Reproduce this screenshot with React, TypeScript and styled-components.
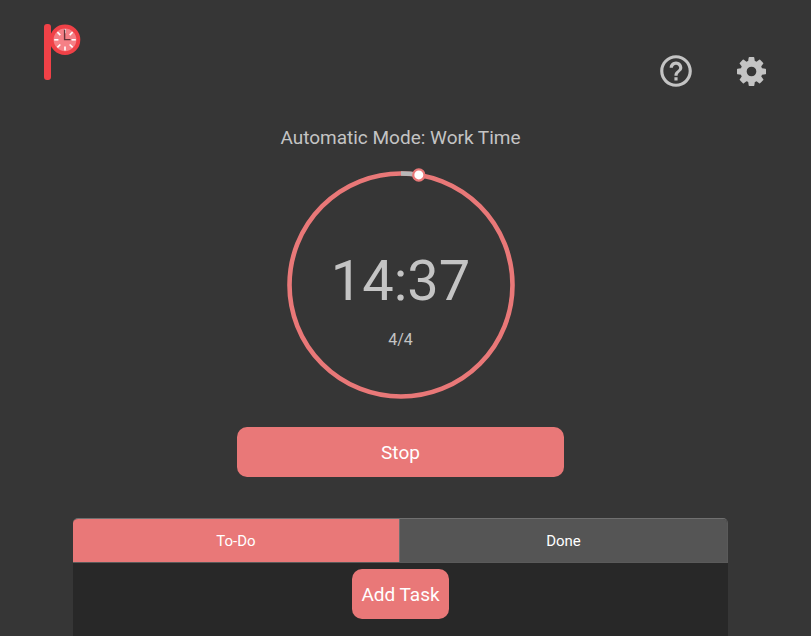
import React from "react";
import styled, { createGlobalStyle } from "styled-components";
import { MdHelpOutline } from "react-icons/md";

const GlobalStyle = createGlobalStyle`
  *, *::before, *::after { box-sizing: border-box; }
  html { background: #363636; }
  body {
    margin: 0;
    min-height: 100vh;
    color: #c4c4c4;
    font-family: Roboto, sans-serif;
  }
  button { font-family: inherit; cursor: pointer; }
  #root { min-height: 100vh; display: flex; flex-direction: column; }
`;

const Page = styled.div`
  flex: 1;
  display: flex;
  flex-direction: column;
`;

const Header = styled.header`
  display: flex;
  justify-content: space-between;
  padding: 24px 45px 0 43px;
  height: 124px;
`;

const Tools = styled.nav`
  display: flex;
  align-items: center;
  gap: 42px;
  height: 38px;
  margin-top: 28px;
`;

const IconButton = styled.button`
  display: flex;
  padding: 0;
  border: 0;
  background: none;
  color: #c4c4c4;
`;

const Main = styled.main`
  flex: 1;
  display: flex;
  flex-direction: column;
  align-items: center;
  padding: 0 83px 0 73px;
`;

const Mode = styled.h1`
  margin: 0;
  font-size: 19px;
  font-weight: 400;
  line-height: 28px;
`;

const Dial = styled.section`
  display: grid;
  place-items: center;
  margin-top: 13px;
  > * { grid-area: 1 / 1; }
`;

const Readout = styled.div`
  display: flex;
  flex-direction: column;
  align-items: center;
  gap: 16px;
  padding-top: 28px;
`;

const Time = styled.div`
  font-size: 56px;
  line-height: 66px;
`;

const Round = styled.div`
  font-size: 16px;
  line-height: 20px;
`;

const PinkButton = styled.button<{ $wide?: boolean }>`
  width: ${(p) => (p.$wide ? "50%" : "auto")};
  height: 50px;
  padding: 0 9px;
  border: 0;
  border-radius: 10px;
  background: #e97878;
  color: #fff;
  font-size: 19px;
`;

const StopRow = styled.div`
  display: flex;
  justify-content: center;
  width: 100%;
  margin-top: 22px;
`;

const Tasks = styled.section`
  flex: 1;
  display: flex;
  flex-direction: column;
  width: 100%;
  margin-top: 41px;
`;

const TabList = styled.div`
  display: grid;
  grid-template-columns: 1fr 1fr;
  height: 45px;
  overflow: hidden;
  border: solid;
  border-width: 1px 1px 1px 0;
  border-color: #707070 #5a5a5a #5a5a5a;
  border-radius: 5px 5px 0 0;
`;

const Tab = styled.button<{ $active?: boolean }>`
  padding: 0;
  border: 0;
  border-right: ${(p) => (p.$active ? "1px solid #707070" : "0")};
  background: ${(p) => (p.$active ? "#e97878" : "#555")};
  color: #fff;
  font-size: 15px;
`;

const Panel = styled.div`
  flex: 1;
  display: flex;
  justify-content: center;
  align-items: flex-start;
  padding-top: 6px;
  background: #282828;
`;

const HOUR_MARKS = [0, 45, 90, 135, 180, 225, 270, 315];

function Logo() {
  return (
    <svg width="38" height="57" viewBox="0 0 38 57" role="img" aria-label="Pomodoro logo">
      <rect x="1" y="0" width="7" height="56" rx="3" fill="#f04147" />
      <circle cx="22" cy="15.8" r="15.3" fill="#f04147" />
      <circle cx="22" cy="15.8" r="11.4" fill="#f58086" />
      {HOUR_MARKS.map((angle) => (
        <path key={angle} d="M22 5v4.2" stroke="#fff" strokeWidth="1.6" transform={`rotate(${angle} 22 15.8)`} />
      ))}
      <path d="M21.6 5.5V15.6H27.5" fill="none" stroke="#653338" strokeWidth="1.4" />
    </svg>
  );
}

function Gear() {
  return (
    <svg width="29" height="29" viewBox="0 128 1536 1536" fill="currentColor" aria-hidden="true">
      <path d="M1024 896q0-106-75-181t-181-75-181 75-75 181 75 181 181 75 181-75 75-181zm512-109v222q0 12-8 23t-20 13l-185 28q-19 54-39 91 35 50 107 138 10 12 10 25t-9 23q-27 37-99 108t-94 71q-12 0-26-9l-138-108q-44 23-91 38-16 136-29 186-7 28-36 28h-222q-14 0-24.5-8.5t-11.5-21.5l-28-184q-49-16-90-37l-141 107q-10 9-25 9-14 0-25-11-126-114-165-168-7-10-7-23 0-12 8-23 15-21 51-66.5t54-70.5q-27-50-41-99l-183-27q-13-2-21-12.5t-8-23.5v-222q0-12 8-23t19-13l186-28q14-46 39-92-40-57-107-138-10-12-10-24 0-10 9-23 26-36 98.5-107.5t94.5-71.5q13 0 26 10l138 107q44-23 91-38 16-136 29-186 7-28 36-28h222q14 0 24.5 8.5t11.5 21.5l28 184q49 16 90 37l142-107q9-9 24-9 13 0 25 10 129 119 165 170 7 8 7 22 0 12-8 23-15 21-51 66.5t-54 70.5q26 50 41 98l183 28q13 2 21 12.5t8 23.5z" />
    </svg>
  );
}

function ProgressRing({ remaining, total }: { remaining: number; total: number }) {
  const radius = 111.5;
  const angle = (1 - remaining / total) * 2 * Math.PI;
  const x = 120 + radius * Math.sin(angle);
  const y = 120 - radius * Math.cos(angle);
  return (
    <svg width="240" height="240" viewBox="0 0 240 240" aria-hidden="true">
      <circle cx="120" cy="120" r={radius} fill="none" stroke="#e97878" strokeWidth="4.6" />
      <path d={`M120 8.5A${radius} ${radius} 0 0 1 ${x} ${y}`} fill="none" stroke="#b8b8b8" strokeWidth="4.6" />
      <circle cx={x} cy={y} r="5.6" fill="#fff" stroke="#e97878" strokeWidth="2.2" />
    </svg>
  );
}

export default function App() {
  return (
    <>
      <GlobalStyle />
      <Page>
        <Header>
          <Logo />
          <Tools aria-label="Tools">
            <IconButton type="button" aria-label="Help">
              <MdHelpOutline size={38} />
            </IconButton>
            <IconButton type="button" aria-label="Settings">
              <Gear />
            </IconButton>
          </Tools>
        </Header>
        <Main>
          <Mode>Automatic Mode: Work Time</Mode>
          <Dial aria-label="Timer">
            <ProgressRing remaining={877} total={900} />
            <Readout>
              <Time role="timer">14:37</Time>
              <Round>4/4</Round>
            </Readout>
          </Dial>
          <StopRow>
            <PinkButton type="button" $wide>Stop</PinkButton>
          </StopRow>
          <Tasks>
            <TabList role="tablist">
              <Tab type="button" role="tab" id="todo-tab" aria-selected="true" aria-controls="todo-panel" $active>To-Do</Tab>
              <Tab type="button" role="tab" aria-selected="false">Done</Tab>
            </TabList>
            <Panel role="tabpanel" id="todo-panel" aria-labelledby="todo-tab">
              <PinkButton type="button">Add Task</PinkButton>
            </Panel>
          </Tasks>
        </Main>
      </Page>
    </>
  );
}
